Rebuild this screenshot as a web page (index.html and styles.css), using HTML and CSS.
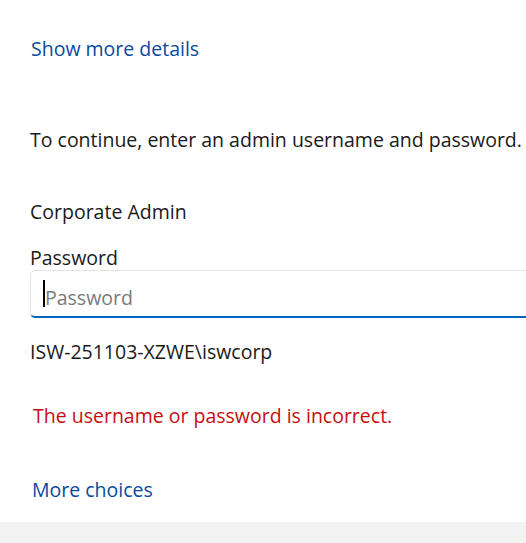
FILE: index.html
```html
<!DOCTYPE html>
<html lang="en">
<head>
<meta charset="utf-8">
<title>Admin credentials</title>
<link rel="stylesheet" href="styles.css">
</head>
<body>
<div class="page">
  <main class="content">
    <a class="link link-details" href="#">Show more details</a>
    <p class="text intro">To continue, enter an admin username and password.</p>
    <p class="text account">Corporate Admin</p>
    <label class="text label">Password</label>
    <div class="field">
      <span class="caret"></span>
      <span class="placeholder">Password</span>
    </div>
    <p class="text domain">ISW-251103-XZWE\iswcorp</p>
    <p class="text error">The username or password is incorrect.</p>
    <a class="link link-choices" href="#">More choices</a>
  </main>
  <footer class="footer"></footer>
</div>
</body>
</html>
```

FILE: styles.css
```css
html, body {
  margin: 0;
  padding: 0;
  background: #ffffff;
  overflow: hidden;
}

.page {
  width: 526px;
  height: 543px;
  display: flex;
  flex-direction: column;
  font-family: "Open Sans", "Noto Sans", "Liberation Sans", sans-serif;
  font-size: 19.5px;
  line-height: 28px;
  color: #1a1a1a;
}

.content {
  flex: 1;
  display: flex;
  flex-direction: column;
  align-items: flex-start;
  padding: 33px 0 0 30px;
}

.text,
.link {
  display: block;
  margin: 0;
  white-space: nowrap;
  line-height: 25px;
  padding-top: 3px;
}

.link {
  color: #0a4a9e;
  text-decoration: none;
}

.link-details {
  margin-left: 1px;
}

.intro {
  margin-top: 63px;
}

.account {
  margin-top: 44px;
}

.label {
  margin-top: 18px;
}

.field {
  box-sizing: border-box;
  width: 520px;
  height: 48px;
  border: 1px solid #e3e3e3;
  border-bottom: 2px solid #0067c0;
  border-radius: 5px;
  display: flex;
  align-items: center;
  padding-left: 12px;
  background: #ffffff;
}

.caret {
  width: 2px;
  height: 27px;
  background: #000000;
}

.placeholder {
  color: #7a7a7a;
  padding-top: 9px;
}

.domain {
  margin-top: 18px;
}

.error {
  margin-top: 36px;
  margin-left: 3px;
  color: #c50f0f;
}

.link-choices {
  margin-top: 46px;
  margin-left: 2px;
}

.footer {
  height: 21px;
  background: #f3f3f3;
}
```
